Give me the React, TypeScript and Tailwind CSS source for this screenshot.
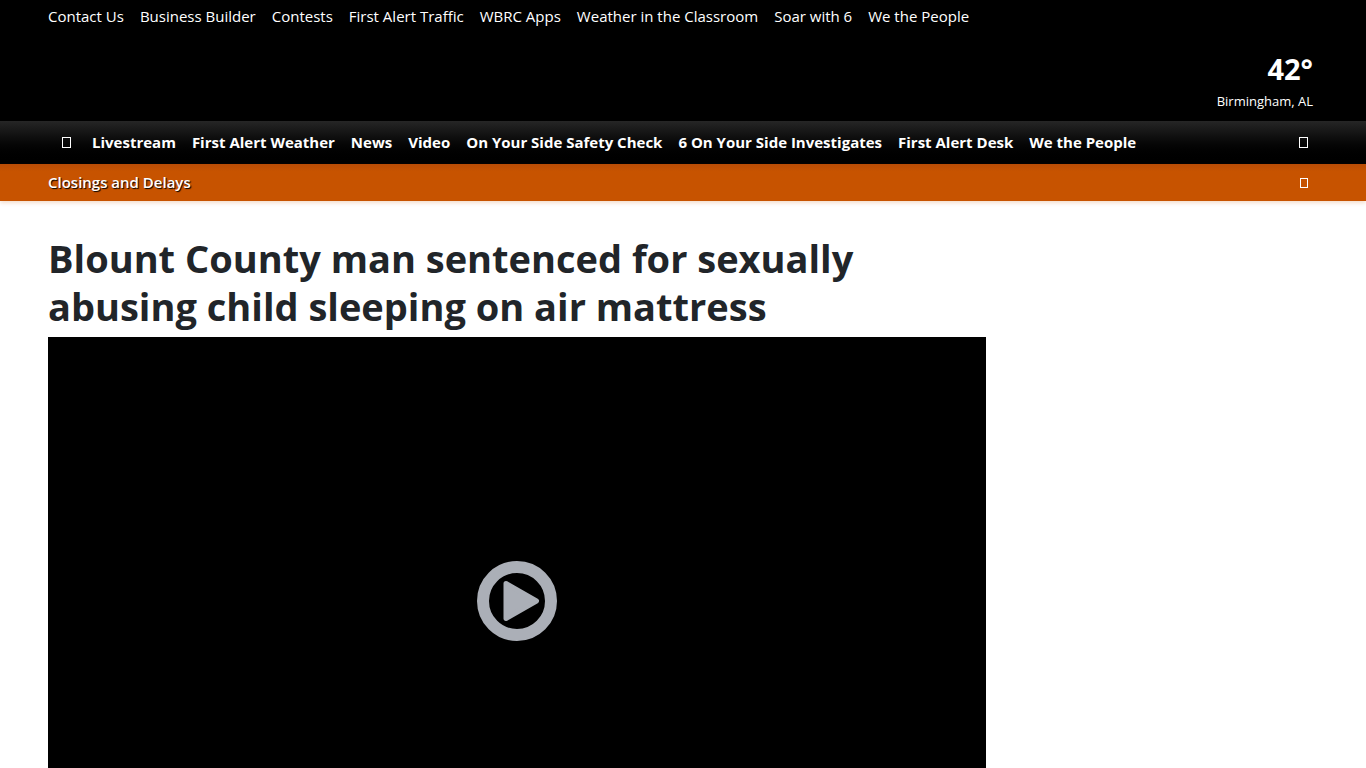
const topLinks = [
  "Contact Us",
  "Business Builder",
  "Contests",
  "First Alert Traffic",
  "WBRC Apps",
  "Weather in the Classroom",
  "Soar with 6",
  "We the People",
];

const mainLinks = [
  "Livestream",
  "First Alert Weather",
  "News",
  "Video",
  "On Your Side Safety Check",
  "6 On Your Side Investigates",
  "First Alert Desk",
  "We the People",
];

function BoxIcon({ small = false }: { small?: boolean }) {
  const w = small ? 8 : 9;
  const h = small ? 10 : 11;
  return (
    <svg width={w} height={h} viewBox={`0 0 ${w} ${h}`} fill="none" stroke="currentColor" aria-hidden="true">
      <rect x="0.5" y="0.5" width={w - 1} height={h - 1} />
    </svg>
  );
}

function PlayIcon() {
  return (
    <svg viewBox="0 0 80 80" className="w-20 h-20" aria-hidden="true">
      <circle cx="40" cy="40" r="34" fill="none" stroke="#abafb7" strokeWidth="12" />
      <path d="M29 22.5 L59.5 40 L29 57.5 Z" fill="#abafb7" stroke="#abafb7" strokeWidth="5" strokeLinejoin="round" />
    </svg>
  );
}

export default function App() {
  return (
    <div className="min-h-screen bg-white font-['Segoe_UI','Open_Sans',sans-serif]">
      <header className="bg-black text-white">
        <nav aria-label="Station" className="flex gap-4 px-12 pt-1 text-[15px] leading-6 whitespace-nowrap">
          {topLinks.map((l) => (
            <a key={l} href="#" className="hover:underline">{l}</a>
          ))}
        </nav>

        <div className="flex justify-end px-[53px] pt-5 pb-2">
          <a href="#" className="text-right">
            <div className="text-[29px] leading-[42px] font-bold">42°</div>
            <div className="text-[13px] leading-[23px]">Birmingham, AL</div>
          </a>
        </div>

        <nav aria-label="Main" className="flex items-center h-[43px] px-12 bg-linear-to-b from-[#262626] to-black text-[15px] font-bold whitespace-nowrap">
          <button aria-label="Menu" className="flex justify-center w-9 mr-2">
            <BoxIcon />
          </button>
          <div className="flex gap-4">
            {mainLinks.map((l) => (
              <a key={l} href="#" className="hover:underline">{l}</a>
            ))}
          </div>
          <button aria-label="Search" className="ml-auto px-2.5">
            <BoxIcon />
          </button>
        </nav>
      </header>

      <div className="flex items-center justify-between h-[37px] px-12 bg-linear-to-b from-[#b84c06] to-[#c75300] to-20% text-white shadow-[0_2px_4px_rgba(199,83,0,0.2)]">
        <a href="#" className="text-[15px] font-semibold text-shadow-[1px_1px_1px_#000]">Closings and Delays</a>
        <button aria-label="Expand closings" className="px-2.5">
          <BoxIcon small />
        </button>
      </div>

      <main className="flex gap-8 px-12 pt-[33px]">
        <article className="flex-1 min-w-0">
          <h1 className="mb-[7px] text-[38px] leading-12 font-bold text-[#212529]">
            Blount County man sentenced for sexually abusing child sleeping on air mattress
          </h1>
          <div className="flex items-center justify-center aspect-video bg-black">
            <button aria-label="Play video">
              <PlayIcon />
            </button>
          </div>
        </article>
        <aside className="w-[300px] shrink-0" />
      </main>
    </div>
  );
}
